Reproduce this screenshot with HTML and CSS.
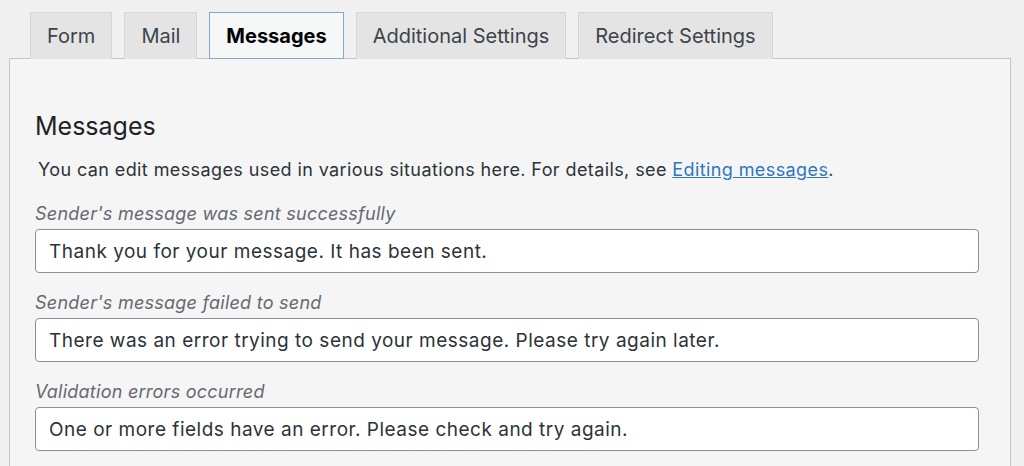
FILE: index.html
```html
<html>
  <head>
    <link rel="stylesheet" href="styles.css">
    <title>Contact Form - Messages</title>
  </head>
  <body>
    <div class="tabs">
      <a class="tab" href="#form">Form</a>
      <a class="tab" href="#mail">Mail</a>
      <a class="tab active" href="#messages">Messages</a>
      <a class="tab" href="#additional">Additional Settings</a>
      <a class="tab" href="#redirect">Redirect Settings</a>
    </div>
    <div class="panel">
      <h2>Messages</h2>
      <p class="intro">You can edit messages used in various situations here. For details, see <a href="#">Editing messages</a>.</p>
      <div class="field">
        <label>Sender's message was sent successfully</label>
        <input type="text" value="Thank you for your message. It has been sent.">
      </div>
      <div class="field">
        <label>Sender's message failed to send</label>
        <input type="text" value="There was an error trying to send your message. Please try again later.">
      </div>
      <div class="field">
        <label>Validation errors occurred</label>
        <input type="text" value="One or more fields have an error. Please check and try again.">
      </div>
    </div>
  </body>
</html>
```

FILE: styles.css
```css
body {
  margin: 0;
  background-color: #f0f0f1;
  font-family: Inter, "Open Sans", sans-serif;
  color: #2c3338;
  overflow: hidden;
}

.tabs {
  display: flex;
  gap: 12px;
  padding: 12px 0 0 30px;
  position: relative;
  z-index: 1;
}

.tab {
  display: block;
  height: 46px;
  line-height: 46px;
  padding: 0 16px;
  font-size: 20px;
  color: #3c434a;
  text-decoration: none;
  background-color: #e4e4e5;
  border: solid 1px #d6d6d8;
  border-bottom: none;
}

.tab.active {
  background-color: #f6f7f7;
  border: solid 1px #7fa8d6;
  color: #000;
  font-weight: 700;
  height: 45px;
}

.panel {
  margin: -1px 13px 0 9px;
  border: solid 1px #c3c4c7;
  background-color: #f5f5f5;
  padding: 52px 31px 40px 25px;
  height: 500px;
}

h2 {
  margin: 0 0 17px;
  font-size: 25px;
  line-height: 30px;
  font-weight: 400;
  color: #1d2327;
}

.intro {
  margin: 0 0 20px 3px;
  font-size: 18px;
  line-height: 24px;
  letter-spacing: 0.4px;
}

.intro a {
  color: #2f77bc;
}

.field {
  display: flex;
  flex-direction: column;
  gap: 4px;
  margin-bottom: 18px;
}

label {
  font-size: 18px;
  line-height: 23px;
  letter-spacing: 0.25px;
  font-style: italic;
  color: #646970;
}

input {
  height: 44px;
  border: solid 1px #8c8f94;
  border-radius: 4px;
  background-color: #fff;
  padding: 0 13px;
  font-family: Inter, "Open Sans", sans-serif;
  font-size: 19px;
  letter-spacing: 0.5px;
  color: #2c3338;
}
```
